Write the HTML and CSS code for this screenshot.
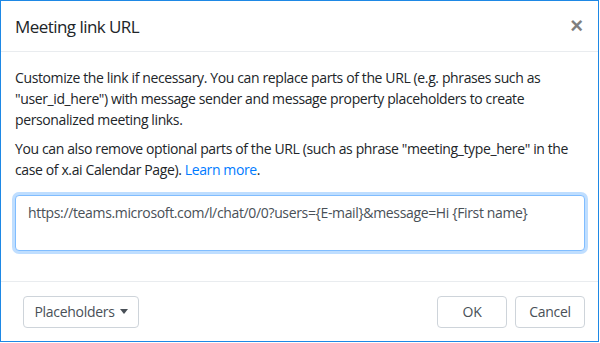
FILE: index.html
```html
<!DOCTYPE html>
<html lang="en">
<head>
    <meta charset="UTF-8">
    <meta name="viewport" content="width=device-width, initial-scale=1.0">
    <title>Meeting link URL</title>
    <link rel="stylesheet" href="styles.css">
</head>
<body>
    <div class="modal">
        <div class="modal-header">
            <h5 class="modal-title">Meeting link URL</h5>
            <button class="close" type="button">&times;</button>
        </div>

        <div class="modal-body">
            <p>Customize the link if necessary. You can replace parts of the URL (e.g. phrases such as "user_id_here") with message sender and message property placeholders to create personalized meeting links.</p>
            <p>You can also remove optional parts of the URL (such as phrase "meeting_type_here" in the case of x.ai Calendar Page). <a href="#">Learn more</a>.</p>
            <textarea class="url-input" rows="2">https://teams.microsoft.com/l/chat/0/0?users={E-mail}&amp;message=Hi {First name}</textarea>
        </div>

        <div class="modal-footer">
            <button class="btn dropdown-toggle" type="button">Placeholders</button>
            <div class="footer-right">
                <button class="btn btn-ok" type="button">OK</button>
                <button class="btn btn-cancel" type="button">Cancel</button>
            </div>
        </div>
    </div>
</body>
</html>
```

FILE: styles.css
```css
html, body {
    margin: 0;
    padding: 0;
    background-color: white;
}

body {
    font-family: 'Open Sans', 'Noto Sans', sans-serif;
    font-size: 14px;
    color: #212529;
}

.modal {
    width: 599px;
    height: 342px;
    box-sizing: border-box;
    border: 1px solid #1e88e5;
    display: flex;
    flex-direction: column;
}

.modal-header {
    display: flex;
    align-items: center;
    justify-content: space-between;
    height: 50px;
    padding: 0 14px;
    border-bottom: 1px solid #e9ecef;
}

.modal-title {
    margin: 0;
    font-size: 17px;
    font-weight: 500;
    letter-spacing: -0.55px;
}

.close {
    background: none;
    border: none;
    padding: 0;
    margin-right: 1px;
    font-family: 'Liberation Sans', sans-serif;
    font-size: 22px;
    font-weight: bold;
    color: #000;
    opacity: 0.5;
    line-height: 1;
    cursor: pointer;
}

.modal-body {
    padding: 15px 14px 15px;
}

.modal-body p {
    margin: 0 0 8px;
    line-height: 21px;
    letter-spacing: -0.38px;
}

.modal-body p + p {
    margin-bottom: 15px;
}

a {
    color: #007bff;
    text-decoration: none;
}

.url-input {
    display: block;
    width: 570px;
    height: 56px;
    box-sizing: border-box;
    margin: 0 0 15px;
    padding: 6px 12px;
    font-family: inherit;
    font-size: 14px;
    line-height: 21px;
    letter-spacing: -0.35px;
    color: #495057;
    border: 1px solid #80bdff;
    border-radius: 4px;
    box-shadow: 0 0 0 3px rgba(0,123,255,0.25);
    resize: none;
    outline: none;
}

.modal-footer {
    display: flex;
    align-items: center;
    justify-content: space-between;
    flex: 1;
    padding: 0 13px 0 22px;
    border-top: 1px solid #e9ecef;
}

.footer-right {
    display: flex;
    gap: 8px;
}

.btn {
    height: 32px;
    padding: 0 12px;
    font-family: inherit;
    font-size: 14px;
    color: #495057;
    background-color: white;
    border: 1px solid #ced4da;
    border-radius: 4px;
    cursor: pointer;
    letter-spacing: -0.3px;
    white-space: nowrap;
}

.btn-ok,
.btn-cancel {
    width: 70px;
}

.dropdown-toggle {
    width: 116px;
    padding: 0 10px;
}

.dropdown-toggle::after {
    content: "";
    display: inline-block;
    margin-left: 5px;
    vertical-align: 3px;
    border-top: 5px solid #495057;
    border-left: 4px solid transparent;
    border-right: 4px solid transparent;
}
```
